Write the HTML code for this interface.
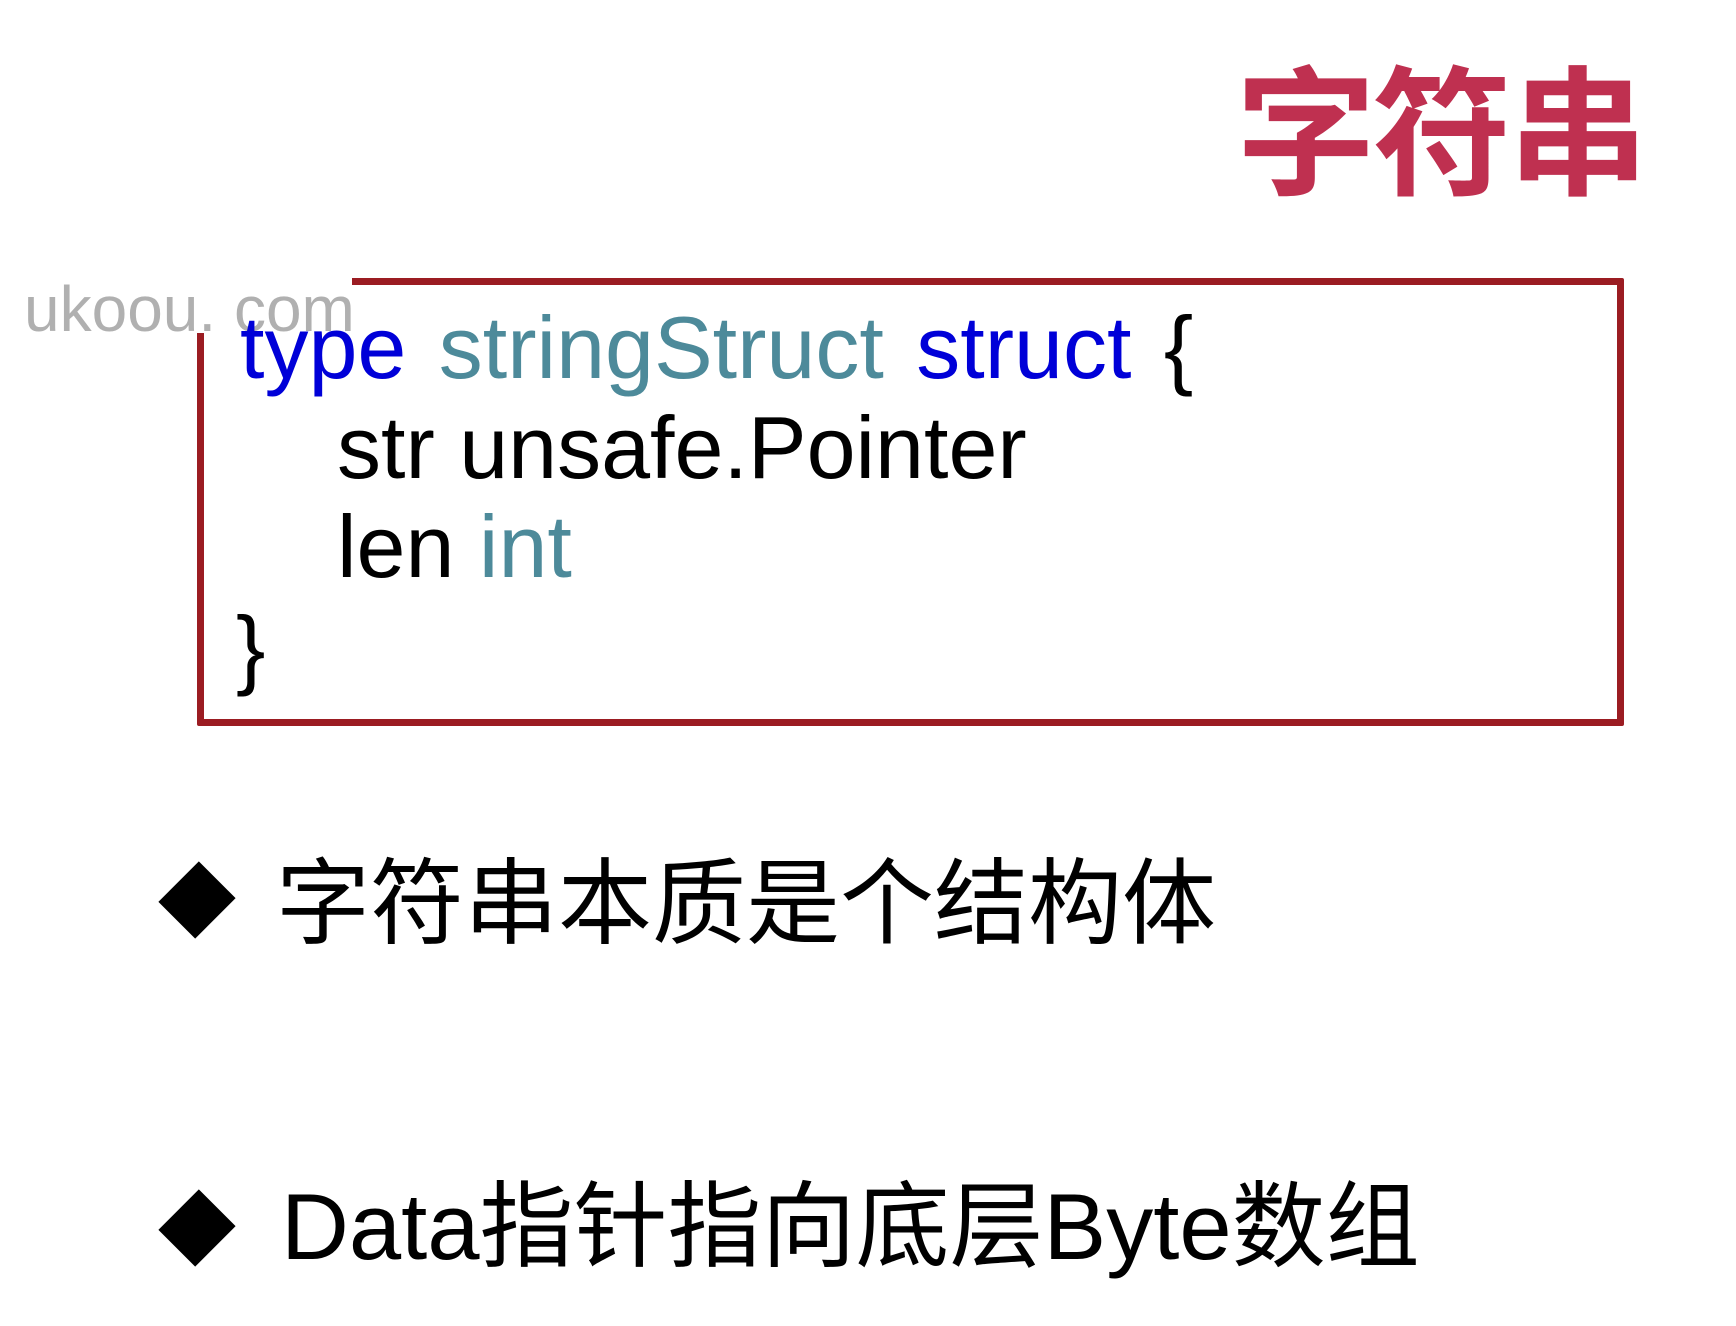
<!DOCTYPE html>
<html><head><meta charset="utf-8"><style>
html,body{margin:0;padding:0;background:#fff;width:1736px;height:1326px;overflow:hidden;position:relative}
div{position:absolute;white-space:nowrap}
.box{left:197px;top:278px;width:1413px;height:434px;border:7px solid #9b1c22;border-radius:2px}
.code{font-family:"Liberation Sans",sans-serif;font-size:88px;line-height:1;letter-spacing:0;color:#000}
.b{color:#0000d8}.t{color:#4d8a9a}
.bul{font-family:"Liberation Sans","Noto Sans CJK SC",sans-serif;font-size:94px;line-height:1;color:#000}
.dia{width:52px;height:52px;background:#000;transform:rotate(45deg) scaleY(1.1)}
</style></head><body>
<div style="left:1236px;top:54px;font-family:'Noto Sans CJK SC',sans-serif;font-weight:700;font-size:140px;line-height:1;letter-spacing:-4px;color:#bf3050">字符串</div>
<div class="box"></div>
<div style="left:0;top:268px;width:352px;height:65px;background:#fff"></div>
<div style="left:24px;top:277px;font-family:'Liberation Sans',sans-serif;font-size:64px;line-height:1;color:#b0b0b0">ukoou. com</div>
<div class="code" style="left:240px;top:304px;word-spacing:8px"><span class="b">type</span> <span class="t">stringStruct</span> <span class="b">struct</span> {</div>
<div class="code" style="left:337px;top:404px">str unsafe.Pointer</div>
<div class="code" style="left:337px;top:503px">len <span class="t">int</span></div>
<div class="code" style="left:236px;top:604px">}</div>
<div class="dia" style="left:171px;top:874px"></div>
<div class="bul" style="left:276px;top:857px">字符串本质是个结构体</div>
<div class="dia" style="left:171px;top:1202px"></div>
<div class="bul" style="left:281px;top:1180px">Data指针指向底层Byte数组</div>
</body></html>
